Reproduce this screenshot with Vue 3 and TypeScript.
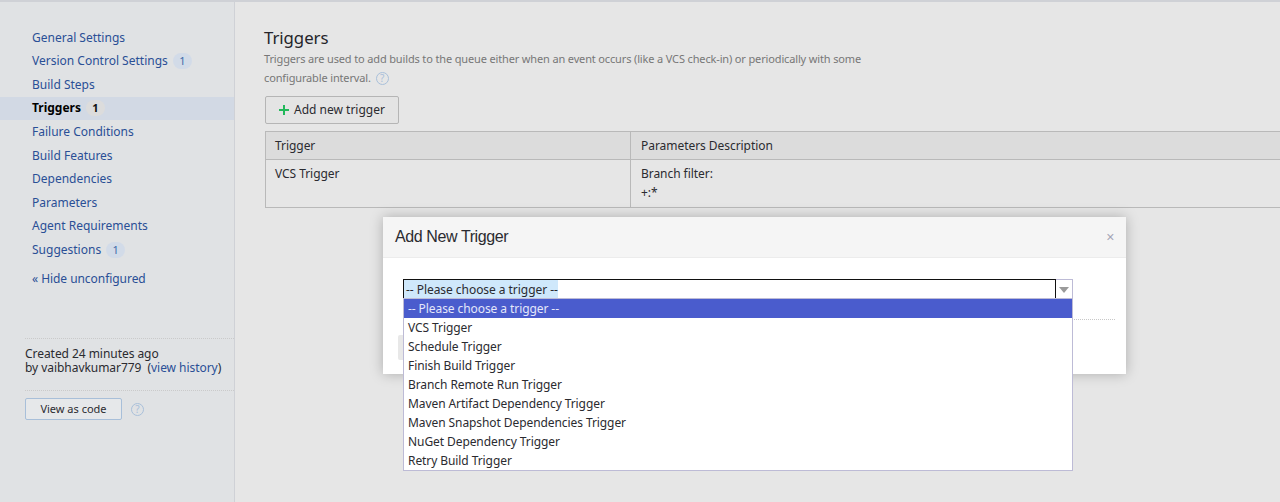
<template>
  <div class="page">
    <aside class="sidebar">
      <nav class="nav">
        <a
          v-for="item in navItems"
          :key="item.label"
          class="nav-item"
          :class="{ active: item.label === 'Triggers' }"
        >
          <span>{{ item.label }}</span>
          <span v-if="item.count" class="count">{{ item.count }}</span>
        </a>
        <a class="hide-link">« Hide unconfigured</a>
      </nav>
      <div class="created">
        Created 24 minutes ago<br />
        by vaibhavkumar779&nbsp;&nbsp;(<a>view history</a>)
      </div>
      <div class="code-row">
        <button class="code-btn">View as code</button>
        <span class="help">?</span>
      </div>
    </aside>

    <main class="content">
      <h2 class="title">Triggers</h2>
      <p class="desc">
        Triggers are used to add builds to the queue either when an event occurs (like a VCS check-in) or periodically with some
        configurable interval.
        <span class="help">?</span>
      </p>
      <button class="add-btn">
        <svg class="plus" width="10" height="10" viewBox="0 0 10 10">
          <path d="M5 0v10M0 5h10" stroke="#22b85a" stroke-width="2" fill="none" />
        </svg>
        <span>Add new trigger</span>
      </button>
      <table class="grid">
        <thead>
          <tr>
            <th class="col-name">Trigger</th>
            <th>Parameters Description</th>
          </tr>
        </thead>
        <tbody>
          <tr>
            <td class="col-name">VCS Trigger</td>
            <td>Branch filter:<br />+:*</td>
          </tr>
        </tbody>
      </table>
    </main>

    <section class="dialog">
      <header class="dialog-head">
        <span>Add New Trigger</span>
        <span class="close">×</span>
      </header>
      <div class="dialog-body">
        <div class="select">
          <div class="select-input"><span class="select-text">-- Please choose a trigger --</span></div>
          <div class="select-arrow"></div>
        </div>
        <div class="dialog-rule"></div>
        <div class="ghost-btn"></div>
        <ul class="options">
          <li v-for="(opt, i) in options" :key="opt" :class="{ picked: i === 0 }">{{ opt }}</li>
        </ul>
      </div>
    </section>
  </div>
</template>

<script setup lang="ts">
interface NavItem {
  label: string;
  count?: number;
}

const navItems: NavItem[] = [
  { label: 'General Settings' },
  { label: 'Version Control Settings', count: 1 },
  { label: 'Build Steps' },
  { label: 'Triggers', count: 1 },
  { label: 'Failure Conditions' },
  { label: 'Build Features' },
  { label: 'Dependencies' },
  { label: 'Parameters' },
  { label: 'Agent Requirements' },
  { label: 'Suggestions', count: 1 },
];

const options: string[] = [
  '-- Please choose a trigger --',
  'VCS Trigger',
  'Schedule Trigger',
  'Finish Build Trigger',
  'Branch Remote Run Trigger',
  'Maven Artifact Dependency Trigger',
  'Maven Snapshot Dependencies Trigger',
  'NuGet Dependency Trigger',
  'Retry Build Trigger',
];
</script>

<style>
html,
body {
  margin: 0;
  background: #e6e6e6;
}
</style>

<style scoped>
.page {
  position: relative;
  display: flex;
  height: 500px;
  overflow: hidden;
  border-top: 2px solid #cfd1d6;
  background: #e6e6e6;
  color: #2b2b30;
  font-family: "Noto Sans", sans-serif;
  font-size: 12px;
  letter-spacing: -0.05px;
  line-height: 18px;
}
.sidebar {
  flex: none;
  width: 235px;
  height: 500px;
  box-sizing: border-box;
  padding-top: 24px;
  background: #e0e2e4;
  border-right: 1px solid #cfd1d6;
}
.nav {
  display: flex;
  flex-direction: column;
}
.nav-item {
  display: flex;
  align-items: center;
  height: 23.55px;
  padding-left: 32px;
  color: #2a4f96;
  letter-spacing: 0;
}
.nav-item.active {
  background: #d2d9e4;
  color: #000;
  font-weight: 700;
}
.count {
  min-width: 7px;
  margin-left: 5px;
  padding: 0 6px;
  border-radius: 8px;
  background: #d2dbe8;
  color: #3f6aa8;
  font-size: 11px;
  font-weight: 400;
  line-height: 16px;
  text-align: center;
}
.active .count {
  background: #dcdcdc;
  color: #111;
  font-weight: 700;
}
.hide-link {
  margin-top: 9px;
  padding-left: 32px;
  color: #2a4f96;
}
.created {
  margin: 50px 0 0 25px;
  padding: 8px 0 15px;
  border-top: 1px dotted #cacaca;
  border-bottom: 1px dotted #cacaca;
  line-height: 14px;
}
.created a {
  color: #2a4f96;
}
.code-row {
  display: flex;
  align-items: center;
  gap: 7px;
  margin: 7px 0 0 25px;
}
.code-btn {
  width: 97px;
  height: 22px;
  padding: 0;
  border: 1px solid #a8bfd9;
  border-radius: 2px;
  background: #e6e8ea;
  color: #2b2b30;
  font: inherit;
  font-size: 11px;
}
.help {
  display: inline-block;
  width: 11px;
  height: 11px;
  margin-left: 2px;
  border: 1px solid #a9c0da;
  border-radius: 50%;
  color: #a9c0da;
  font-size: 10px;
  line-height: 11px;
  text-align: center;
  vertical-align: 0;
}
.content {
  flex: 1;
  min-width: 0;
  padding: 0 0 0 30px;
}
.title {
  margin: 24px 0 0 -1px;
  font-size: 16.8px;
  font-weight: 400;
  line-height: 24px;
  color: #24242a;
}
.desc {
  width: 620px;
  margin: 0 0 0 -1px;
  color: #777;
  font-size: 11px;
  letter-spacing: -0.145px;
  line-height: 18.5px;
}
.add-btn {
  display: flex;
  align-items: center;
  justify-content: center;
  gap: 5px;
  width: 134px;
  height: 28px;
  margin-top: 9px;
  padding: 0;
  border: 1px solid #b5b5b5;
  border-radius: 2px;
  background: #e4e4e4;
  color: #2b2b30;
  font: inherit;
}
.grid {
  width: 1100px;
  margin-top: 7px;
  border-collapse: collapse;
  table-layout: fixed;
}
.grid th,
.grid td {
  padding: 5px 10px;
  border: 1px solid #b9b9b9;
  font-weight: 400;
  text-align: left;
  vertical-align: top;
}
.grid th {
  height: 18px;
  padding-bottom: 4px;
  background: #dcdcdc;
}
.grid td {
  height: 37px;
  padding-top: 4px;
  line-height: 19px;
}
.grid .col-name {
  width: 345px;
  padding-left: 9px;
}
.dialog {
  position: absolute;
  left: 383px;
  top: 215px;
  width: 743px;
  height: 157px;
  background: #fff;
  box-shadow: 0 0 12px rgba(0, 0, 0, 0.25);
}
.dialog-head {
  display: flex;
  align-items: center;
  justify-content: space-between;
  height: 40px;
  padding: 0 12px;
  border-bottom: 1px solid #ececec;
  background: #f5f5f5;
  font-family: "Liberation Sans", sans-serif;
  font-size: 16px;
  letter-spacing: -0.4px;
}
.close {
  color: #a5a5b5;
  font-size: 14px;
}
.dialog-body {
  position: relative;
  padding: 21px 0 0 20px;
}
.select {
  display: flex;
  width: 670px;
  height: 20px;
  box-sizing: border-box;
  border: 1px solid #bdbbd6;
}
.select-input {
  flex: 1;
  border: 1.5px solid #111;
  border-bottom: 0;
  margin: -1px 0 0 -1px;
  line-height: 20px;
  white-space: nowrap;
}
.select-text {
  display: inline-block;
  padding-left: 2px;
  background: #cfe8fb;
}
.select-arrow {
  flex: none;
  position: relative;
  width: 16px;
}
.select-arrow::after {
  content: "";
  position: absolute;
  left: 3px;
  top: 7px;
  border-left: 5px solid transparent;
  border-right: 5px solid transparent;
  border-top: 6px solid #9a9a9a;
}
.dialog-rule {
  width: 712px;
  margin-top: 20px;
  border-top: 1px dotted #c8c8c8;
}
.ghost-btn {
  width: 30px;
  height: 25px;
  margin: 15px 0 0 -5px;
  border-radius: 2px;
  background: #e8e8e8;
}
.options {
  position: absolute;
  left: 20px;
  top: 40px;
  width: 670px;
  box-sizing: border-box;
  margin: 0;
  padding: 0;
  border: 1px solid #bdbbd6;
  background: #fff;
  letter-spacing: -0.08px;
  list-style: none;
}
.options li {
  height: 18px;
  padding: 1px 0 0 4px;
  line-height: 18px;
}
.options li.picked {
  background: #4a5ccd;
  color: #e4e7fa;
}
</style>
